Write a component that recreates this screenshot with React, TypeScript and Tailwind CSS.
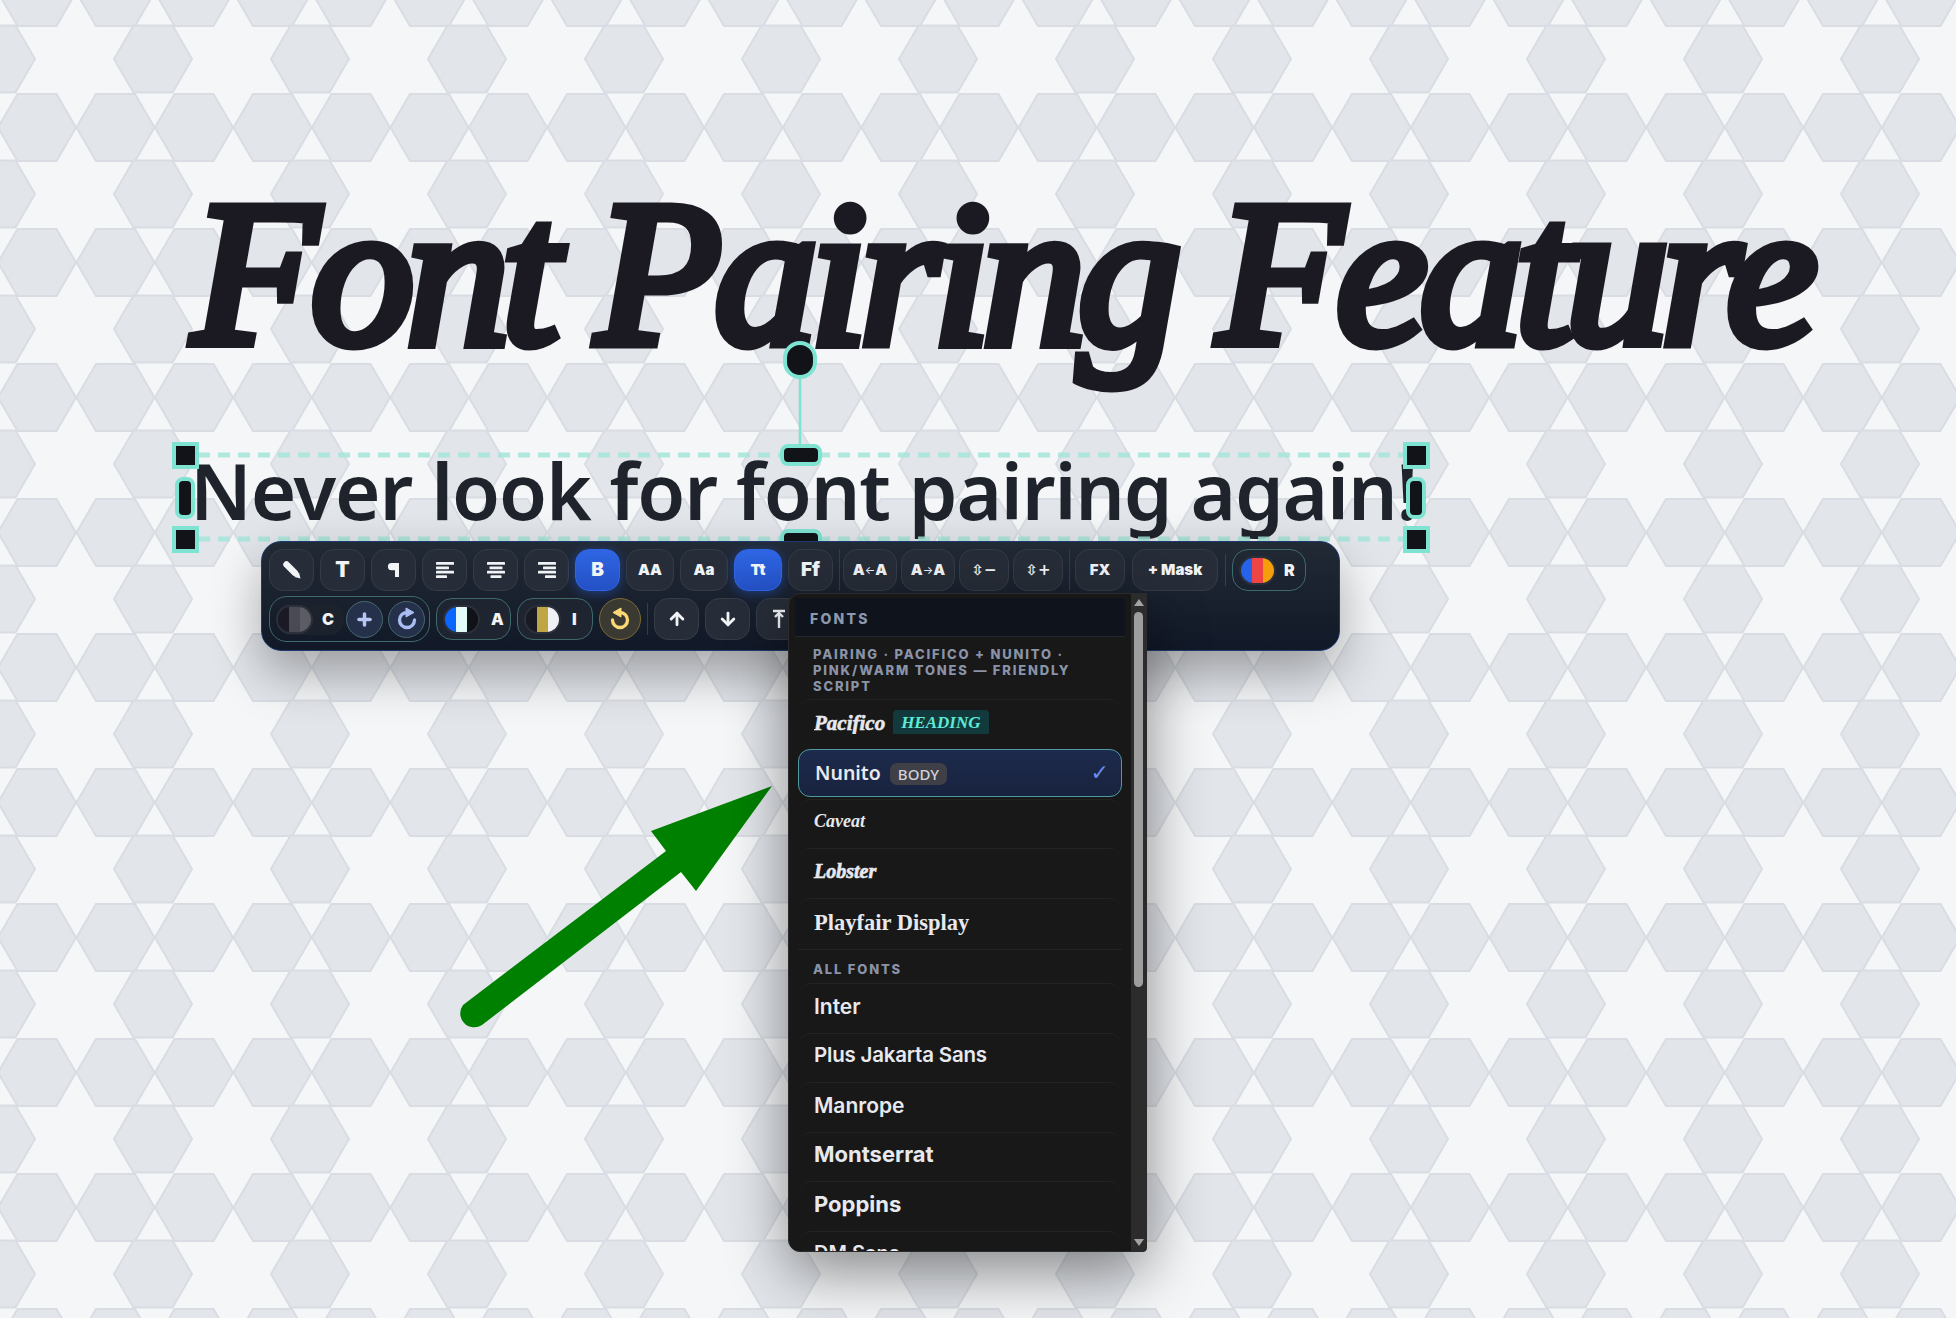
import { ArrowDown, ArrowUp, Plus } from "lucide-react";
import type { ReactNode } from "react";

const Hex = ({ x, y }: { x: number; y: number }) => (
  <polygon points={`${x - 39},${y} ${x - 19.5},${y - 33.5} ${x + 19.5},${y - 33.5} ${x + 39},${y} ${x + 19.5},${y + 33.5} ${x - 19.5},${y + 33.5}`} />
);

const HexBackground = () => (
  <svg className="absolute inset-0" width="1956" height="1318">
    <defs>
      <pattern id="hexes" x="0" y="0" width="157" height="135" patternUnits="userSpaceOnUse">
        <g fill="#e2e5ea" stroke="#d9dde3" strokeWidth="2">
          <Hex x={37} y={-7.5} />
          <Hex x={115.5} y={-7.5} />
          <Hex x={194} y={-7.5} />
          <Hex x={37} y={127.5} />
          <Hex x={115.5} y={127.5} />
          <Hex x={194} y={127.5} />
          <Hex x={-4} y={59} />
          <Hex x={153} y={59} />
        </g>
      </pattern>
    </defs>
    <rect width="1956" height="1318" fill="#f4f6f8" />
    <rect width="1956" height="1318" fill="url(#hexes)" />
  </svg>
);

const Handle = ({ className }: { className: string }) => (
  <div className={`absolute bg-[#111318] border-[4px] border-[#7fe3d2] ${className}`} />
);

const Selection = () => (
  <>
    <svg className="absolute left-0 top-0" width="1956" height="600">
      <g stroke="#a5e6da" strokeWidth="5" strokeDasharray="12 8" opacity="0.85">
        <line x1="198" y1="455" x2="1404" y2="455" />
        <line x1="198" y1="539" x2="1404" y2="539" />
      </g>
      <line x1="800" y1="377" x2="800" y2="455" stroke="#7fe3d2" strokeWidth="2.5" />
    </svg>
    <Handle className="left-[172px] top-[442px] w-[27px] h-[27px]" />
    <Handle className="left-[172px] top-[526px] w-[27px] h-[27px]" />
    <Handle className="left-[1403px] top-[442px] w-[27px] h-[27px]" />
    <Handle className="left-[1403px] top-[526px] w-[27px] h-[27px]" />
    <Handle className="left-[175px] top-[477px] w-[20px] h-[42px] rounded-lg" />
    <Handle className="left-[1406px] top-[477px] w-[20px] h-[42px] rounded-lg" />
    <Handle className="left-[780px] top-[444px] w-[42px] h-[22px] rounded-lg" />
    <Handle className="left-[780px] top-[529px] w-[42px] h-[22px] rounded-lg" />
    <Handle className="left-[783px] top-[341px] w-[34px] h-[38px] rounded-full" />
  </>
);

const Btn = ({ w = "w-[45px]", active = false, children }: { w?: string; active?: boolean; children: ReactNode }) => (
  <div
    className={`${w} h-[42px] shrink-0 rounded-[14px] flex items-center justify-center border font-black text-[15px] text-[#f1f3f6] ${
      active
        ? "bg-gradient-to-b from-[#2f66e4] to-[#2450c4] border-[#2f66e4] shadow-[0_2px_12px_rgba(37,99,235,0.45)]"
        : "bg-[#272d38] border-[#363c47]"
    }`}
  >
    {children}
  </div>
);

const Divider = () => <div className="w-px h-[42px] bg-[#363c47] shrink-0" />;

const AlignIcon = ({ bars }: { bars: [number, number][] }) => (
  <svg width="20" height="18" viewBox="0 0 20 18" fill="#f1f3f6">
    {bars.map(([x, w], i) => (
      <rect key={i} x={x} y={1 + i * 4.4} width={w} height="2.8" rx="0.6" />
    ))}
  </svg>
);

const Swatch = ({ colors }: { colors: [string, string, string] }) => (
  <div className="w-[37px] h-[29px] rounded-full overflow-hidden flex shrink-0 border-2 border-[#2b303a]">
    <div className="flex-1" style={{ background: colors[0] }} />
    <div className="flex-1" style={{ background: colors[1] }} />
    <div className="flex-1" style={{ background: colors[2] }} />
  </div>
);

const Pill = ({ colors, label, w }: { colors: [string, string, string]; label: string; w: string }) => (
  <div className={`${w} h-[42px] shrink-0 rounded-[16px] border border-[#3f6a6c] bg-[#1e2530] flex items-center pl-[6px] gap-[11px] font-black text-[16px] text-[#f1f3f6]`}>
    <Swatch colors={colors} />
    {label}
  </div>
);

const SpinIcon = ({ color, flip = false }: { color: string; flip?: boolean }) => (
  <svg width="24" height="24" viewBox="0 0 24 24" className={flip ? "-scale-x-100" : ""}>
    <path d="M12 5.500A7.500 7.500 0 1 0 19.500 13" fill="none" stroke={color} strokeWidth="3.300" strokeLinecap="round" />
    <path d="M11 1 19 5.500 11 10z" fill={color} stroke={color} strokeWidth="1" strokeLinejoin="round" />
  </svg>
);

const Toolbar = () => (
  <div className="absolute left-[261px] top-[541px] w-[1079px] h-[110px] rounded-[20px] bg-gradient-to-b from-[#222a36] to-[#111827] border border-[#1e3a6e] shadow-[0_22px_50px_rgba(0,0,0,0.32)] font-['Inter',sans-serif] px-[7px] pt-[7px] flex flex-col gap-[5px]">
    <div className="flex items-center gap-[6px]">
      <Btn>
        <svg width="20" height="20" viewBox="0 0 20 20" fill="#f1f3f6">
          <path d="M4.500 4.500 13 13" stroke="#f1f3f6" strokeWidth="6.500" strokeLinecap="round" />
          <path d="M12.500 17 17 12.500 18.500 18.500z" />
        </svg>
      </Btn>
      <Btn><span className="text-[21px] font-black">T</span></Btn>
      <Btn>
        <svg width="11" height="14" viewBox="0 0 11 14" fill="#f1f3f6">
          <path d="M3.500 0H11v14H7V7.200H3.500a3.600 3.600 0 0 1 0-7.200z" />
        </svg>
      </Btn>
      <Btn><AlignIcon bars={[[1, 18], [1, 13], [1, 18], [1, 11]]} /></Btn>
      <Btn><AlignIcon bars={[[1, 18], [3.5, 13], [1, 18], [4.5, 11]]} /></Btn>
      <Btn><AlignIcon bars={[[1, 18], [6, 13], [1, 18], [8, 11]]} /></Btn>
      <Btn active><span className="text-[19px] font-black">B</span></Btn>
      <Btn w="w-[48px]">AA</Btn>
      <Btn w="w-[48px]">Aa</Btn>
      <Btn w="w-[48px]" active>Tt</Btn>
      <Btn><span className="text-[19px]">Ff</span></Btn>
      <Divider />
      <div className="flex gap-[4px] -ml-[3px]">
        <Btn w="w-[54px]">A<span className="text-[11px] font-normal">←</span>A</Btn>
        <Btn w="w-[54px]">A<span className="text-[11px] font-normal">→</span>A</Btn>
        <Btn w="w-[50px]"><span className="font-['DejaVu_Sans',sans-serif] text-[15px] font-bold">⇳−</span></Btn>
        <Btn w="w-[50px]"><span className="font-['DejaVu_Sans',sans-serif] text-[15px] font-bold">⇳+</span></Btn>
      </div>
      <Divider />
      <div className="flex gap-[7px] -ml-[1px]">
        <Btn w="w-[50px]">FX</Btn>
        <Btn w="w-[86px]"><span className="text-[15px]">+ Mask</span></Btn>
      </div>
      <div className="w-px h-[32px] bg-[#3a404b] shrink-0 ml-[1px]" />
      <div className="w-[74px] h-[42px] shrink-0 rounded-[16px] border border-[#3f6a6c] flex items-center pl-[6px] gap-[8px] font-black text-[16px] text-[#f1f3f6]">
        <Swatch colors={["#2563eb", "#ef4444", "#f59e0b"]} />
        R
      </div>
    </div>
    <div className="flex items-center gap-[6px]">
      <div className="w-[161px] h-[46px] shrink-0 rounded-[18px] border border-[#3f6a6c] flex items-center pl-[6px] font-black text-[16px] text-[#f1f3f6]">
        <div className="w-[68px] h-[32px] shrink-0 rounded-[14px] bg-[#1c222c] flex items-center">
          <Swatch colors={["#1a1a24", "#4a4a55", "#5c5c64"]} />
          <span className="ml-[9px]">C</span>
        </div>
        <div className="flex gap-[5px] ml-[2px]">
          <div className="w-[37px] h-[37px] rounded-full border border-[#47686f] bg-[#25304a] flex items-center justify-center">
            <Plus size={19} strokeWidth={4.4} color="#b6c6f4" />
          </div>
          <div className="w-[37px] h-[37px] rounded-full border border-[#47686f] bg-[#25304a] flex items-center justify-center">
            <SpinIcon color="#a9bdf3" />
          </div>
        </div>
      </div>
      <Pill w="w-[75px]" colors={["#0b66ff", "#e2fbf8", "#101218"]} label="A" />
      <Pill w="w-[76px]" colors={["#1a1a24", "#c0a544", "#f0f1f4"]} label="I" />
      <div className="w-[42px] h-[42px] shrink-0 rounded-full border border-[#7d6c35] bg-[#3a3a32] flex items-center justify-center">
        <SpinIcon color="#fbd775" flip />
      </div>
      <div className="w-px h-[32px] bg-[#363c47] shrink-0" />
      <Btn><ArrowUp size={20} strokeWidth={3.4} color="#f1f3f6" /></Btn>
      <Btn><ArrowDown size={20} strokeWidth={3.4} color="#f1f3f6" /></Btn>
      <Btn>
        <svg width="18" height="20" viewBox="0 0 18 20" fill="none" stroke="#f1f3f6" strokeWidth="2.4">
          <path d="M3 2h12M9 19V4M5 8l4-4 4 4" />
        </svg>
      </Btn>
    </div>
  </div>
);

const FontRow = ({ className, children }: { className: string; children: ReactNode }) => (
  <div className={`h-[49.5px] mx-[10px] border-t border-[#232323] rounded-t-[12px] flex items-center pl-[15px] pb-[4px] text-[#e7e9ee] overflow-hidden ${className}`}>
    {children}
  </div>
);

const FontMenu = () => (
  <div className="absolute left-[788px] top-[593px] w-[359px] h-[659px] rounded-l-[12px] rounded-br-[4px] bg-[#181818] border border-[#2b2b2b] shadow-[0_20px_60px_rgba(0,0,0,0.45)] flex overflow-hidden font-['Inter',sans-serif]">
    <div className="flex-1 min-w-0 overflow-hidden">
      <div className="mt-[4px] mx-[6px] h-[39px] bg-[#0f141c] border-b border-[#232833] flex items-center pl-[15px] pt-[3px] font-extrabold text-[14px] tracking-[0.16em] text-[#8b98ad]">
        FONTS
      </div>
      <div className="pl-[24px] pr-[10px] pt-[9px] h-[62px] font-extrabold text-[13px] leading-[16px] tracking-[0.14em] text-[#8a93a8]">
        PAIRING · PACIFICO + NUNITO · PINK/WARM TONES — FRIENDLY SCRIPT
      </div>
      <FontRow className="items-start">
        <div className="flex items-start h-[34px] overflow-hidden gap-[8px] pt-[10px]">
          <span className="font-['Liberation_Serif',serif] font-bold italic text-[21px] leading-[26px] [-webkit-text-stroke:0.6px_#e7e9ee]">Pacifico</span>
          <span className="bg-[#123a3c] rounded-t-[4px] px-[8px] h-[26px] font-['Liberation_Serif',serif] font-bold italic text-[17px] text-[#5eead4]">HEADING</span>
        </div>
      </FontRow>
      <div className="h-[48px] mx-[9px] mb-[2px] rounded-[12px] border border-[#4f9aa0] bg-gradient-to-b from-[#1e2a4c] to-[#17233e] flex items-center pl-[16px] pr-[12px] text-[20px] font-semibold text-[#e7e9ee] relative">
        <span className="font-['Noto_Sans',sans-serif] font-semibold text-[19.5px]">Nunito</span>
        <span className="ml-[9px] mt-[2px] px-[8px] h-[22px] rounded-[7px] bg-[#3f4047] text-[15px] font-medium font-['Noto_Sans',sans-serif] leading-[23px] text-[#d1d3d8]">BODY</span>
        <span className="ml-auto text-[22px] text-[#6b8cf0] font-['DejaVu_Sans',sans-serif]">✓</span>
      </div>
      <FontRow className="font-['Liberation_Serif',serif] italic font-bold text-[18px]">Caveat</FontRow>
      <FontRow className="font-['Liberation_Serif',serif] italic font-bold text-[20px] [-webkit-text-stroke:0.6px_#e7e9ee]">Lobster</FontRow>
      <FontRow className="font-['Liberation_Serif',serif] font-bold text-[22.5px] !pb-0">Playfair Display</FontRow>
      <div className="border-t border-[#232323] mx-[9px] mt-[2px]">
        <div className="pl-[15px] pt-[12px] h-[33px] font-extrabold text-[13px] leading-[14px] tracking-[0.14em] text-[#8a93a8]">ALL FONTS</div>
      </div>
      <FontRow className="font-semibold text-[21px]">Inter</FontRow>
      <FontRow className="font-semibold text-[20.5px] tracking-[-0.01em]">Plus Jakarta Sans</FontRow>
      <FontRow className="font-semibold text-[21px]">Manrope</FontRow>
      <FontRow className="font-bold text-[22px]">Montserrat</FontRow>
      <FontRow className="font-bold text-[22px]">Poppins</FontRow>
      <FontRow className="font-semibold text-[20px] !items-start pt-[6px]">DM Sans</FontRow>
    </div>
    <div className="w-[15px] shrink-0 bg-[#2c2c2c] flex flex-col items-center relative">
      <div className="mt-[5px] w-0 h-0 border-x-[5px] border-x-transparent border-b-[7px] border-b-[#a3a3a3]" />
      <div className="mt-[6px] w-[9px] h-[375px] rounded-full bg-[#9e9e9e]" />
      <div className="mt-auto mb-[5px] w-0 h-0 border-x-[5px] border-x-transparent border-t-[7px] border-t-[#a3a3a3]" />
    </div>
  </div>
);

const GreenArrow = () => (
  <svg className="absolute left-0 top-0" width="1956" height="1318" fill="#008000">
    <path d="M666 851 651 831 772 786 696 891 681 872 482 1025A14 14 0 0 1 463 1005Z" />
  </svg>
);

export default function App() {
  return (
    <div className="relative w-[1956px] h-[1318px] overflow-hidden bg-[#f4f6f8]">
      <HexBackground />
      <h1 className="absolute left-[193px] top-[134px] whitespace-nowrap font-['Liberation_Serif',serif] font-normal italic text-[205px] leading-[280px] tracking-[-7px] text-[#1b1a22] [-webkit-text-stroke:11px_#1b1a22] blur-[0.5px]">
        Font Pairing Feature
      </h1>
      <p className="absolute left-[190px] top-[440px] whitespace-nowrap font-['Noto_Sans',sans-serif] font-semibold text-[78px] leading-[100px] tracking-[-1.2px] text-[#1f232b] blur-[0.5px]">
        Never look for font pairing again!
      </p>
      <Selection />
      <GreenArrow />
      <Toolbar />
      <FontMenu />
    </div>
  );
}
